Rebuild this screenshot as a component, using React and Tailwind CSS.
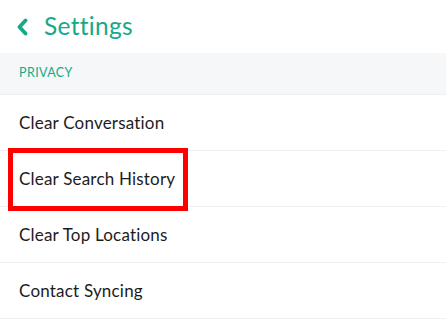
import React from 'react';

const rows = ['Clear Conversation', 'Clear Search History', 'Clear Top Locations', 'Contact Syncing'];

const Row = ({ label, marked }) => (
  <div className="relative flex h-[56px] items-center border-b border-[#efefef] px-[19px]">
    <span className="text-[17px] tracking-[0.2px] text-[#1c1c1c]">{label}</span>
    {marked && (
      // red highlight around the item
      <div className="absolute left-[8px] top-[-3px] h-[63px] w-[180px] border-[5px] border-[#ff0000]" />
    )}
  </div>
);

export default function App() {
  return (
    <div className="h-[325px] w-[446px] overflow-hidden bg-white" style={{ fontFamily: 'Lato, "Noto Sans", sans-serif' }}>
      <div className="flex h-[53px] items-center gap-[16px] pl-[16px]">
        <svg width="12" height="18" viewBox="0 0 12 18" fill="none">
          <path d="M9.5 2.5 L3.5 9 L9.5 15.5" stroke="#17a987" strokeWidth="3.8" strokeLinecap="round" strokeLinejoin="round" />
        </svg>
        <span className="text-[24.5px] leading-none tracking-[0.3px] text-[#17a987]">Settings</span>
      </div>
      <div className="flex h-[41px] items-center bg-[#f6f7f9] px-[19px]">
        <span className="text-[12.5px] tracking-[0.4px] text-[#17a987]">PRIVACY</span>
      </div>
      <div className="border-t border-[#efefef]">
        {rows.map((r, i) => (
          <Row key={r} label={r} marked={i === 1} />
        ))}
      </div>
    </div>
  );
}
